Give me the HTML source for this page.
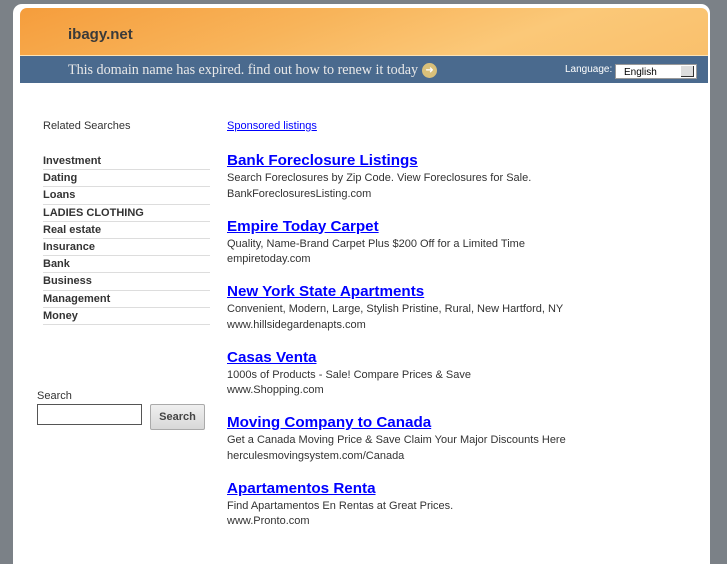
<!DOCTYPE html>
<html><head><style>
body{margin:0;width:727px;height:545px;background:#7b8187;font-family:"Liberation Sans",sans-serif;overflow:hidden;position:relative}
.panel{position:absolute;left:13px;top:4px;width:697px;height:560px;background:#fff;border-radius:9px 9px 0 0}
.hdr{position:absolute;left:20px;top:8px;width:688px;height:47px;background:linear-gradient(160deg,#f59d3c 0%,#f8b45a 40%,#fbc878 70%,#f9c06c 100%);border-radius:7px 7px 0 0;border-bottom:1px solid #fde3b5}
.hdr b{position:absolute;left:48px;top:18px;font-size:15px;color:#3a3a3a}
.bar{position:absolute;left:20px;top:56px;width:688px;height:27px;background:#4a6a8e}
.bar .msg{position:absolute;left:48px;top:6px;font-family:"Liberation Serif",serif;font-size:14.2px;letter-spacing:-0.05px;color:#e8e8e8}
.arr{display:inline-block;width:15px;height:15px;border-radius:50%;background:#d9c07a;color:#fff;font-size:10px;text-align:center;line-height:15px;vertical-align:1px;margin-left:4px}
.lang{position:absolute;left:545px;top:8px;font-size:10px;color:#fff}
.sel{position:absolute;left:595px;top:8px;height:15px;background:#fff;border:1px solid #999;font-size:10px;line-height:15px;padding-left:8px;box-sizing:border-box;width:82px}
.sel i{position:absolute;right:2px;top:1px;width:12px;height:10px;background:#ddd;border-right:1px solid #333;border-bottom:1px solid #333}
.rs{position:absolute;left:43px;top:120px;font-size:11px;color:#333}
.cats{position:absolute;left:43px;top:154px;width:167px}
.cats div{font-size:11px;font-weight:bold;color:#333;height:15.2px;line-height:15px;border-bottom:1px solid #ddd;margin-bottom:1px}
.sl{position:absolute;left:37px;top:390px;font-size:11px;color:#333}
.inp{position:absolute;left:37px;top:404px;width:105px;height:21px;border:1px solid #555;box-sizing:border-box}
.btn{position:absolute;left:150px;top:404px;width:55px;height:26px;border:1px solid #aaa;border-radius:2px;background:linear-gradient(#f0f0f0,#d8d8d8);font-size:11px;font-weight:bold;color:#444;text-align:center;line-height:24px;box-sizing:border-box}
.sp{position:absolute;left:227px;top:120px;font-size:11px;color:#00f;text-decoration:underline}
.ads{position:absolute;left:227px;top:152px}
.ad{height:65.5px}
.ad a{font-size:15.2px;font-weight:bold;color:#00f;text-decoration:underline;display:block;height:19px}
.ad p{margin:0;font-size:11px;color:#333;line-height:15.5px}
</style></head><body>
<div class="panel"></div>
<div class="hdr"><b>ibagy.net</b></div>
<div class="bar"><span class="msg">This domain name has expired. find out how to renew it today<span class="arr">➜</span></span>
<span class="lang">Language:</span><div class="sel">English<i></i></div></div>
<div class="rs">Related Searches</div>
<div class="cats"><div>Investment</div><div>Dating</div><div>Loans</div><div>LADIES CLOTHING</div><div>Real estate</div><div>Insurance</div><div>Bank</div><div>Business</div><div>Management</div><div>Money</div></div>
<div class="sl">Search</div><div class="inp"></div><div class="btn">Search</div>
<div class="sp">Sponsored listings</div>
<div class="ads">
<div class="ad"><a>Bank Foreclosure Listings</a><p>Search Foreclosures by Zip Code. View Foreclosures for Sale.<br>BankForeclosuresListing.com</p></div>
<div class="ad"><a>Empire Today Carpet</a><p>Quality, Name-Brand Carpet Plus $200 Off for a Limited Time<br>empiretoday.com</p></div>
<div class="ad"><a>New York State Apartments</a><p>Convenient, Modern, Large, Stylish Pristine, Rural, New Hartford, NY<br>www.hillsidegardenapts.com</p></div>
<div class="ad"><a>Casas Venta</a><p>1000s of Products - Sale! Compare Prices &amp; Save<br>www.Shopping.com</p></div>
<div class="ad"><a>Moving Company to Canada</a><p>Get a Canada Moving Price &amp; Save Claim Your Major Discounts Here<br>herculesmovingsystem.com/Canada</p></div>
<div class="ad"><a>Apartamentos Renta</a><p>Find Apartamentos En Rentas at Great Prices.<br>www.Pronto.com</p></div>
</div>
</body></html>
